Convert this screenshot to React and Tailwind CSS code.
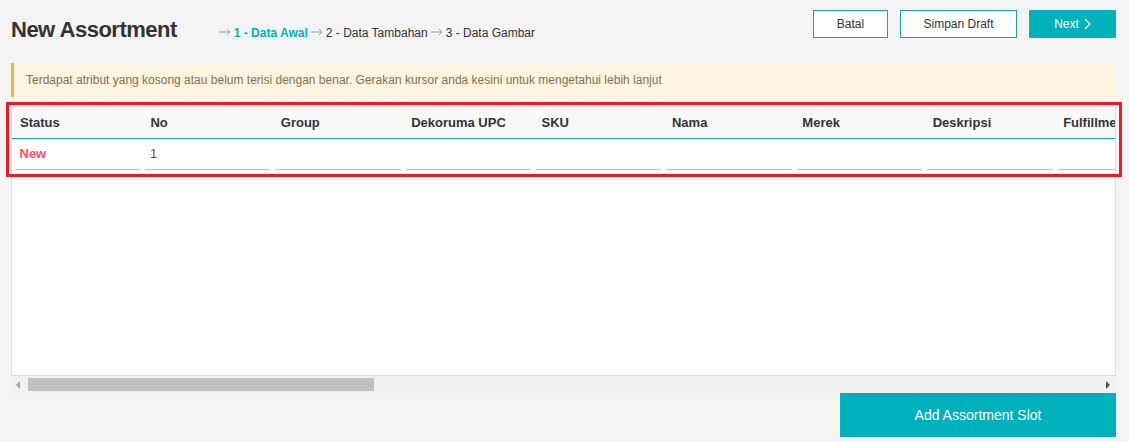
import React from "react";

const headers = [
  "Status",
  "No",
  "Group",
  "Dekoruma UPC",
  "SKU",
  "Nama",
  "Merek",
  "Deskripsi",
  "Fulfillment",
];

function Arrow({ first }) {
  return (
    <svg
      className={(first ? "" : "ml-[3px] ") + "inline-block mr-[3px] align-[1px]"}
      width="12"
      height="8"
      viewBox="0 0 12 8"
      fill="none"
    >
      <path d="M0 4h11M8 1l3 3-3 3" stroke="#9c9c9c" strokeWidth="1" />
    </svg>
  );
}

export default function App() {
  return (
    <div className="relative w-[1129px] h-[442px] bg-[#f4f4f4] pl-[11px] pr-[13px] font-['Liberation_Sans',Arial,sans-serif] overflow-hidden">
      {/* Header */}
      <div className="flex items-start h-[63px]">
        <div className="flex items-baseline pt-[17px]">
          <h1 className="text-[22px] leading-[26px] font-bold tracking-[-0.5px] text-[#333]">
            New Assortment
          </h1>
          <div className="ml-[42px] text-[12px] text-[#333] whitespace-nowrap">
            <Arrow first />
            <span className="text-[#00b0ba] font-semibold">1 - Data Awal</span>
            <Arrow />
            <span>2 - Data Tambahan</span>
            <Arrow />
            <span>3 - Data Gambar</span>
          </div>
        </div>
        <div className="ml-auto mt-[10px] flex gap-[12px]">
          <button className="w-[75px] h-[28px] border border-[#1aa3ab] bg-white text-[12px] text-[#333]">
            Batal
          </button>
          <button className="w-[117px] h-[28px] border border-[#1aa3ab] bg-white text-[12px] text-[#333]">
            Simpan Draft
          </button>
          <button className="w-[87px] h-[28px] bg-[#00b0ba] text-[12px] text-white flex items-center justify-center gap-[5px] rounded-[1px]">
            <span>Next</span>
            <svg width="7" height="12" viewBox="0 0 7 12" fill="none">
              <path d="M1 1l5 5-5 5" stroke="white" strokeWidth="1.2" />
            </svg>
          </button>
        </div>
      </div>

      {/* Warning banner */}
      <div className="h-[34px] flex items-center bg-[#fef5e0] border-l-[3px] border-[#ecb445] pl-[12px] text-[12px] text-[#87704a]">
        Terdapat atribut yang kosong atau belum terisi dengan benar. Gerakan kursor anda kesini untuk mengetahui lebih lanjut
      </div>

      {/* Table */}
      <div className="mt-[9px] h-[270px] bg-white border border-[#dedede] overflow-hidden">
        <div className="flex bg-[#f8f8f8] border-b border-[#1ea4ab] w-max">
          {headers.map((h) => (
            <div
              key={h}
              className="w-[130.4px] shrink-0 pl-[8px] h-[31px] leading-[31px] text-[13px] font-bold text-[#333] whitespace-nowrap"
            >
              {h}
            </div>
          ))}
        </div>
        <div className="flex w-max">
          {headers.map((h, i) => (
            <div key={h} className="w-[130.4px] shrink-0 px-[2.5px]">
              <div
                className={
                  "h-[31px] leading-[30px] border-b border-[#c2c2c2] text-[13px] " +
                  (i === 0
                    ? "pl-[5px] font-bold text-[#ff4f5e]"
                    : "pl-[5px] text-[#555]")
                }
              >
                {i === 0 ? "New" : i === 1 ? "1" : ""}
              </div>
            </div>
          ))}
        </div>
      </div>

      {/* Scrollbar */}
      <div className="relative h-[17px] bg-[#f1f1f1]">
        <svg className="absolute left-[5px] top-[5px]" width="5" height="8" viewBox="0 0 5 8">
          <path d="M4 0v8L0 4z" fill="#a3a3a3" />
        </svg>
        <div className="absolute left-[17px] top-[2px] w-[346px] h-[13px] bg-[#c1c1c1]" />
        <svg className="absolute right-[6px] top-[5px]" width="5" height="8" viewBox="0 0 5 8">
          <path d="M1 0v8l4-4z" fill="#505050" />
        </svg>
      </div>

      {/* Add button */}
      <div className="flex justify-end">
        <button className="w-[276px] h-[44px] bg-[#00b0ba] text-white text-[14px]">
          Add Assortment Slot
        </button>
      </div>

      {/* Annotation overlay */}
      <div className="absolute left-[6px] top-[102px] w-[1116px] h-[75px] border-[3px] border-[#ed1c24] pointer-events-none" />
    </div>
  );
}
